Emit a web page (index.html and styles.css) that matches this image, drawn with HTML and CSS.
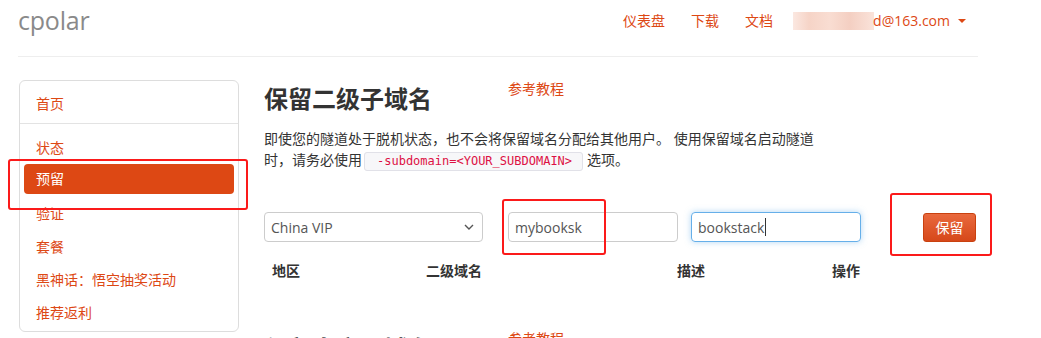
FILE: index.html
```html
<!DOCTYPE html>
<html lang="zh-CN">
<head>
<meta charset="utf-8">
<title>cpolar - 保留二级子域名</title>
<link rel="stylesheet" href="styles.css">
</head>
<body>
<div class="page">
  <header class="topbar">
    <div class="brand">cpolar</div>
    <nav class="topnav">
      <a class="navlink">仪表盘</a>
      <a class="navlink">下载</a>
      <a class="navlink">文档</a>
      <a class="navlink user"><span class="blur"></span>d@163.com<span class="caret"></span></a>
    </nav>
  </header>

  <div class="main">
    <aside class="sidebar">
      <a class="side-item">首页</a>
      <div class="side-divider"></div>
      <a class="side-item">状态</a>
      <a class="side-item active">预留</a>
      <a class="side-item">验证</a>
      <a class="side-item">套餐</a>
      <a class="side-item">黑神话：悟空抽奖活动</a>
      <a class="side-item">推荐返利</a>
    </aside>

    <section class="content">
      <div class="title-row">
        <h1 class="title">保留二级子域名</h1>
        <a class="ref-link">参考教程</a>
      </div>
      <p class="desc">即使您的隧道处于脱机状态，也不会将保留域名分配给其他用户。 使用保留域名启动隧道时，请务必使用<code class="code">-subdomain=&lt;YOUR_SUBDOMAIN&gt;</code>选项。</p>

      <div class="form-row">
        <div class="field select">China VIP
          <svg class="chev" width="10" height="6" viewBox="0 0 10 6"><path d="M1 1l4 4 4-4" fill="none" stroke="#555" stroke-width="1.4"/></svg>
        </div>
        <div class="field sub">mybooksk</div>
        <div class="field focus">bookstack<span class="cursor"></span></div>
        <div class="btn-cell"><button class="btn">保留</button></div>
      </div>

      <div class="table-head">
        <div class="th c1">地区</div>
        <div class="th c2">二级域名</div>
        <div class="th c3">描述</div>
        <div class="th c4">操作</div>
      </div>

      <div class="title-row next">
        <h1 class="title">保留自定义域名</h1>
        <a class="ref-link">参考教程</a>
      </div>
    </section>
  </div>
</div>

<div class="mark mark-side"></div>
<div class="mark mark-sub"></div>
<div class="mark mark-btn"></div>
</body>
</html>
```

FILE: styles.css
```css
html, body {
  margin: 0;
  padding: 0;
  background: #fff;
  overflow: hidden;
}
body {
  font-family: "Open Sans", "Noto Sans CJK SC", sans-serif;
  font-size: 14px;
  color: #333;
  width: 1041px;
  height: 338px;
  position: relative;
}
a { text-decoration: none; }

.page {
  width: 960px;
  margin-left: 18px;
}

.topbar {
  height: 56px;
  border-bottom: 1px solid #eeeeee;
  display: flex;
  align-items: flex-start;
  justify-content: space-between;
}
.brand {
  font-family: "Open Sans", sans-serif;
  font-size: 25px;
  color: #8a8a8a;
  line-height: 32px;
  margin-top: 4px;
  letter-spacing: -0.2px;
}
.topnav {
  display: flex;
  align-items: center;
  height: 20px;
  margin-top: 11px;
  margin-right: 12px;
}
.navlink {
  color: #dd4814;
  font-size: 14px;
  line-height: 20px;
  margin-left: 26px;
  display: flex;
  align-items: center;
}
.navlink.user {
  margin-left: 20px;
}
.blur {
  display: inline-block;
  width: 81px;
  height: 18px;
  background: linear-gradient(90deg, #fbe8e1 0%, #f6d4c7 20%, #f9ddd2 45%, #f4cfc2 70%, #fae3da 100%);
  margin-right: -1px;
}
.caret {
  display: inline-block;
  width: 0;
  height: 0;
  border-left: 4px solid transparent;
  border-right: 4px solid transparent;
  border-top: 4px solid #dd4814;
  margin-left: 8px;
}

.main {
  display: flex;
  margin-top: 23px;
}

.sidebar {
  width: 220px;
  margin-left: 1px;
  border: 1px solid #dddddd;
  border-radius: 6px;
  padding: 6px 4px 1px 4px;
  box-sizing: border-box;
  height: 252px;
  display: flex;
  flex-direction: column;
  flex-shrink: 0;
}
.side-item {
  color: #dd4814;
  line-height: 33px;
  height: 33px;
  padding-left: 12px;
  border-radius: 4px;
  font-size: 14px;
  flex-shrink: 0;
}
.side-divider {
  height: 1px;
  background: #e3e3e3;
  margin: 3px -4px 7px -4px;
  flex-shrink: 0;
}
.side-item.active {
  background: #dd4814;
  color: #fff;
  height: 30px;
  line-height: 30px;
  margin-bottom: 3px;
}

.content {
  margin-left: 25px;
  width: 712px;
}
.title-row {
  display: flex;
  align-items: flex-start;
  height: 40px;
}
.title {
  margin: 2px 0 0 0;
  font-size: 24px;
  font-weight: bold;
  line-height: 34px;
  color: #333;
  width: 244px;
}
.ref-link {
  color: #dd4814;
  font-size: 14px;
  line-height: 20px;
  margin-top: -1px;
}
.desc {
  margin: 8px 0 0 0;
  width: 560px;
  line-height: 21px;
  font-size: 14px;
  color: #333;
}
.code {
  font-family: "DejaVu Sans Mono", monospace;
  font-size: 12px;
  color: #dd1144;
  background: #f7f7f9;
  border: 1px solid #e1e1e8;
  border-radius: 3px;
  padding: 1px 10px 2px 12px;
  margin: 0 4px 0 2px;
}

.form-row {
  display: flex;
  align-items: center;
  margin-top: 40px;
  height: 30px;
}
.field {
  height: 30px;
  box-sizing: border-box;
  border: 1px solid #cccccc;
  border-radius: 4px;
  padding: 0 6px;
  display: flex;
  align-items: center;
  font-size: 14px;
  color: #555;
  flex-shrink: 0;
}
.select {
  width: 219px;
  justify-content: space-between;
  padding-right: 8px;
}
.sub {
  width: 170px;
  margin-left: 25px;
}
.focus {
  width: 170px;
  margin-left: 13px;
  border-color: #66afe9;
  box-shadow: 0 0 6px rgba(102, 175, 233, 0.5);
}
.cursor {
  display: inline-block;
  width: 1px;
  height: 18px;
  background: #333;
  margin-left: 1px;
}
.btn-cell {
  margin-left: 62px;
}
.btn {
  width: 53px;
  height: 29px;
  border: 1px solid #c9410f;
  border-radius: 3px;
  background: linear-gradient(#e9693d, #d6481a);
  color: #fff;
  font-family: "Noto Sans CJK SC", sans-serif;
  font-size: 14px;
  padding: 0;
}

.table-head {
  display: flex;
  margin-top: 11px;
  height: 36px;
}
.th {
  font-weight: bold;
  padding: 8px;
  line-height: 20px;
  font-size: 14px;
}
.c1 { width: 138px; }
.c2 { width: 235px; }
.c3 { width: 139px; }
.c4 { width: 136px; }

.title-row.next {
  margin-top: 41px;
}

.mark {
  position: absolute;
  border: 2.5px solid #fb1a1a;
  border-radius: 3px;
  box-sizing: border-box;
}
.mark-side { left: 8px; top: 159px; width: 240px; height: 51px; }
.mark-sub { left: 502px; top: 199px; width: 104px; height: 56px; }
.mark-btn { left: 890px; top: 193px; width: 102px; height: 63px; }
```
